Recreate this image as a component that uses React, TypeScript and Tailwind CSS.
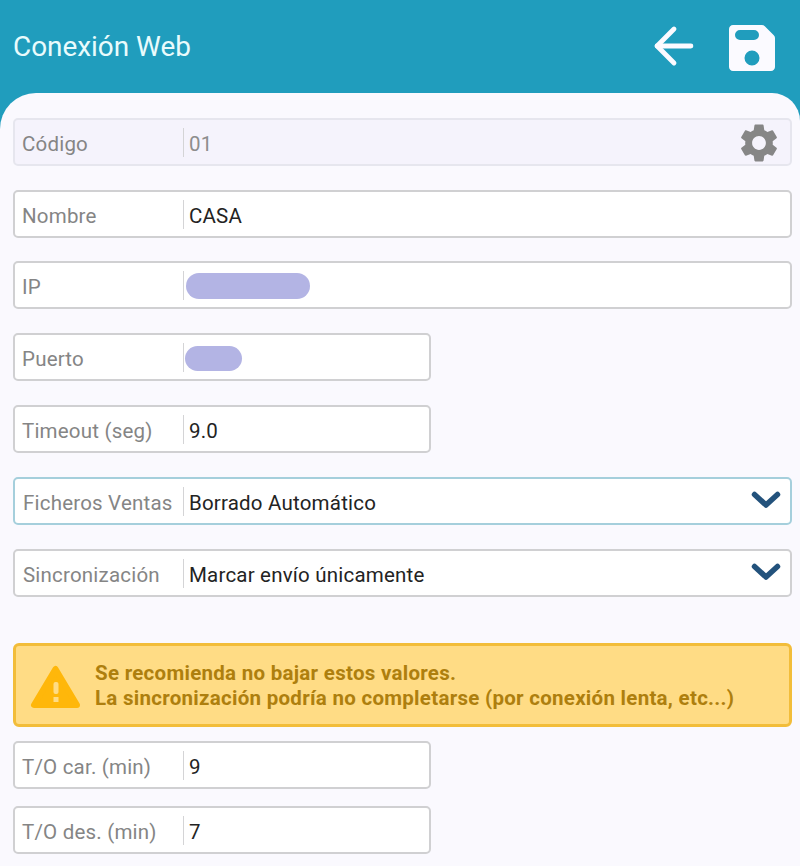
import { ArrowLeft } from 'lucide-react'

function Chevron() {
  return (
    <svg width="30" height="18" viewBox="0 0 30 18" fill="none" className="shrink-0">
      <path d="M3.5 3.5 15 14 26.5 3.5" stroke="#23527c" strokeWidth="5.5" strokeLinecap="round" strokeLinejoin="round" />
    </svg>
  )
}

function Gear() {
  return (
    <svg width="46" height="46" viewBox="0 0 24 24" fill="#868686" className="shrink-0">
      <path d="M19.14 12.94c.04-.3.06-.61.06-.94 0-.32-.02-.64-.07-.94l2.03-1.58a.49.49 0 0 0 .12-.61l-1.92-3.32a.488.488 0 0 0-.59-.22l-2.39.96c-.5-.38-1.03-.7-1.62-.94l-.36-2.54a.484.484 0 0 0-.48-.41h-3.84c-.24 0-.43.17-.47.41l-.36 2.54c-.59.24-1.13.57-1.62.94l-2.39-.96c-.22-.08-.47 0-.59.22L2.74 8.87c-.12.21-.08.47.12.61l2.03 1.58c-.05.3-.09.63-.09.94s.02.64.07.94l-2.03 1.58a.49.49 0 0 0-.12.61l1.92 3.32c.12.22.37.29.59.22l2.39-.96c.5.38 1.03.7 1.62.94l.36 2.54c.05.24.24.41.48.41h3.84c.24 0 .44-.17.47-.41l.36-2.54c.59-.24 1.13-.56 1.62-.94l2.39.96c.22.08.47 0 .59-.22l1.92-3.32c.12-.22.07-.47-.12-.61l-2.01-1.58zM12 15.6c-1.98 0-3.6-1.62-3.6-3.6s1.62-3.6 3.6-3.6 3.6 1.62 3.6 3.6-1.62 3.6-3.6 3.6z" />
    </svg>
  )
}

function Save() {
  return (
    <svg width="46" height="46" viewBox="0 0 46 46" className="mt-[3px] shrink-0">
      <path
        fillRule="evenodd"
        fill="#fbfaff"
        d="M4 0h29c1 0 2 .4 2.8 1.2l9 9c.8.8 1.2 1.8 1.2 2.8v29c0 2.2-1.8 4-4 4H4c-2.2 0-4-1.8-4-4V4c0-2.2 1.8-4 4-4zM11 5h14a5 5 0 0 1 0 10H11a5 5 0 0 1 0-10zM23 25.500a7.500 7.500 0 1 0 0 15 7.500 7.500 0 0 0 0-15z"
      />
    </svg>
  )
}

function Warning() {
  return (
    <svg width="52" height="46" viewBox="0 0 52 46" className="mt-[4px] shrink-0">
      <path fill="#ffb70a" stroke="#ffb70a" strokeWidth="6" strokeLinejoin="round" d="M25.500 5 4 41h43z" />
      <rect x="23.500" y="18" width="5" height="12" rx="2" fill="#ffdc85" />
      <rect x="23.500" y="33" width="5" height="5" fill="#ffdc85" />
    </svg>
  )
}

type FieldProps = {
  label: string
  value?: string
  short?: boolean
  mask?: 'ip' | 'port'
  readOnly?: boolean
  focused?: boolean
  select?: boolean
  className?: string
}

function Field({ label, value, short, mask, readOnly, focused, select, className }: FieldProps) {
  let box = 'border-[#d0d0d2] bg-white'
  if (readOnly) box = 'border-[#e6e6ee] bg-[#f5f3fc]'
  if (focused) box = 'border-[#a5cfdc] bg-white'

  return (
    <div
      className={`flex h-12 items-center rounded-[5px] border-2 ${select ? 'pl-[8px]' : 'pl-[7px]'} ${box} ${short ? 'w-[418px]' : 'w-[779px]'} ${className ?? ''}`}
    >
      <div className={`${select ? 'w-[160px]' : 'w-[161px]'} shrink-0 pt-[4px] text-[20.500px] tracking-[0.2px] text-[#858585]`}>
        {label}
      </div>
      <div className="h-[29px] w-px shrink-0 bg-[#d4d4d6]" />
      {mask === 'ip' && <div className="ml-[2px] mt-[2px] h-[26px] w-[124px] rounded-full bg-[#b3b4e4]" />}
      {mask === 'port' && <div className="ml-[1px] mt-[2px] h-[25px] w-[57px] rounded-full bg-[#b3b4e4]" />}
      {value && (
        <div className={`flex-1 pl-[5px] pt-[4px] text-[20.500px] tracking-[0.2px] ${readOnly ? 'text-[#8d8d8d]' : 'text-[#232323]'}`}>
          {value}
        </div>
      )}
      {select && (
        <div className="mr-[9px] mt-[-2px]">
          <Chevron />
        </div>
      )}
      {readOnly && (
        <div className="mr-[8px] mt-[2px]">
          <Gear />
        </div>
      )}
    </div>
  )
}

export default function App() {
  return (
    <div className="h-[866px] overflow-hidden bg-[#209dbd] font-['Roboto',sans-serif]">
      <header className="flex h-[93px] items-center pl-[13px] pr-[25px]">
        <h1 className="flex-1 text-[27.900px] font-normal text-[#e9fbfc]">Conexión Web</h1>
        <ArrowLeft size={58} strokeWidth={2} color="#fbfaff" className="mr-[26px] mt-[-2px]" />
        <Save />
      </header>

      <main className="h-[773px] rounded-tl-[36px] rounded-tr-[28px] bg-[#faf9fe] pl-[13px] pt-[25px]">
        <Field label="Código" value="01" readOnly />
        <Field label="Nombre" value="CASA" className="mt-6" />
        <Field label="IP" mask="ip" className="mt-[23px]" />
        <Field label="Puerto" mask="port" short className="mt-6" />
        <Field label="Timeout (seg)" value="9.0" short className="mt-6" />
        <Field label="Ficheros Ventas" value="Borrado Automático" select focused className="mt-6" />
        <Field label="Sincronización" value="Marcar envío únicamente" select className="mt-6" />

        <div className="mt-[46px] flex h-[84px] w-[779px] items-center rounded-[6px] border-[3px] border-[#f2bd3a] bg-[#ffdc85] pl-[14px]">
          <Warning />
          <p className="ml-[13px] pt-[2px] text-[20.500px] leading-[25px] font-bold tracking-[0.28px] text-[#ae7f0e]">
            Se recomienda no bajar estos valores.
            <br />
            La sincronización podría no completarse (por conexión lenta, etc...)
          </p>
        </div>

        <Field label="T/O car. (min)" value="9" short className="mt-[14px]" />
        <Field label="T/O des. (min)" value="7" short className="mt-[17px]" />
      </main>
    </div>
  )
}
